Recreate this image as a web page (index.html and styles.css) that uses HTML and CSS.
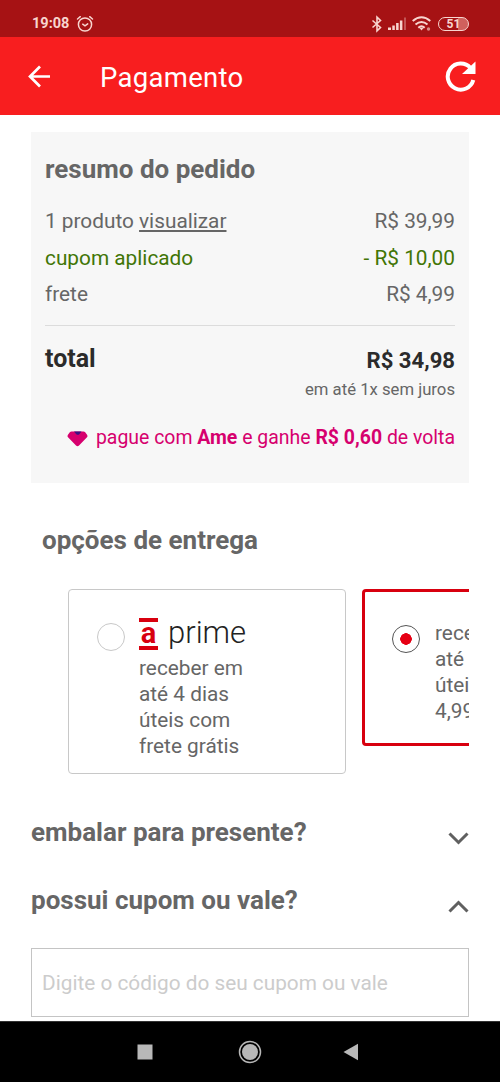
FILE: index.html
```
<!DOCTYPE html>
<html lang="pt-BR">
<head>
<meta charset="utf-8">
<title>Pagamento</title>
<link rel="stylesheet" href="styles.css">
</head>
<body>
<div class="statusbar">
  <span class="clock">19:08</span>
  <svg class="alarm" width="18" height="18" viewBox="0 0 18 18" fill="none" stroke="#f8d5cf" stroke-width="1.5" stroke-linecap="round"><circle cx="9" cy="9.5" r="6.6"/><path d="M6.7 9.2 9 10.9l2.700-2M1.500 4 4.300 1.700M16.500 4l-2.800-2.300"/></svg>
  <div class="indicators">
    <svg width="12" height="18" viewBox="0 0 12 18" fill="none" stroke="#f8d5cf" stroke-width="1.6"><path d="m1.500 5.500 8 7L6 15.800V2.200L9.500 5.500l-8 7"/></svg>
    <svg width="19" height="18" viewBox="0 0 19 18" fill="#f8d5cf"><path d="M0 12.500h3V15H0zM4.300 10.500h2.500V15H4.300zM8.100 8h2.500v7H8.100zM11.900 5.500h2.500V15h-2.500z"/><path opacity=".35" d="M16 2.500h2V15h-2z"/></svg>
    <svg class="wifi" width="20" height="18" viewBox="0 0 20 18" fill="none" stroke="#f8d5cf" stroke-width="2"><path d="M.7 6Q9.500-1.500 18.300 6M3.500 9.500q6-5 12 0M6.300 12.700q3.200-2.700 6.400 0"/><path d="m7.500 13 2 2.500 2-2.500z" fill="#f8d5cf" stroke="none"/><circle cx="16.500" cy="14" r="1.700" fill="#d98c87" stroke="none"/></svg>
    <span class="battery">51</span>
  </div>
</div>
<header class="appbar">
  <svg width="24" height="24" viewBox="0 0 24 24" fill="none" stroke="#fff" stroke-width="2.700"><path d="M23 12.500H3M13 2.500l-10 10 10 10"/></svg>
  <h1 class="title">Pagamento</h1>
  <svg class="reload" width="32" height="32" viewBox="0 0 32 32"><path d="M28.300 20A13 13 0 1 1 25.500 8" fill="none" stroke="#fff" stroke-width="4"/><path d="M30.500 1.500V14H17z" fill="#fff"/></svg>
</header>
<main class="content">
  <section class="summary">
    <h2 class="heading">resumo do pedido</h2>
    <div class="lines">
      <div class="line"><span>1 produto <a class="link">visualizar</a></span><span>R$ 39,99</span></div>
      <div class="line discount"><span>cupom aplicado</span><span>- R$ 10,00</span></div>
      <div class="line"><span>frete</span><span>R$ 4,99</span></div>
    </div>
    <div class="total"><span class="total-label">total</span><span class="total-value">R$ 34,98</span></div>
    <p class="installments">em até 1x sem juros</p>
    <p class="cashback">
      <svg width="21" height="16" viewBox="0 0 21 16"><path d="M4.500.5h12q1 0 1.700.8l2 2.700q.8 1.200-.2 2.200l-8 8.300q-1.500 1.400-3 0L1 6.200Q0 5.200.8 4l2-2.700Q3.500.5 4.500.5z" fill="#d6006e"/><path d="M7 .5h7.500l-2.200 2.700q-1.500 1-3 0z" fill="#3b1282"/></svg>
      <span class="cashback-text">pague com <b>Ame</b> e ganhe <b>R$ 0,60</b> de volta</span>
    </p>
  </section>
  <section class="delivery">
    <h2 class="heading delivery-title">opções de entrega</h2>
    <div class="options">
      <div class="option">
        <span class="radio"></span>
        <div>
          <div class="brand"><span class="brand-mark">a</span><span class="brand-name">prime</span></div>
          <p class="option-text">receber em<br>até 4 dias<br>úteis com<br>frete grátis</p>
        </div>
      </div>
      <div class="option selected">
        <span class="radio checked"></span>
        <p class="option-text">receber em<br>até 8 dias<br>úteis por R$<br>4,99</p>
      </div>
    </div>
  </section>
  <div class="accordion"><h2 class="heading">embalar para presente?</h2>
    <svg width="21" height="13" viewBox="0 0 21 13" fill="none" stroke="#606060" stroke-width="3"><path d="m1.500 1.500 9 9 9-9"/></svg></div>
  <div class="accordion"><h2 class="heading">possui cupom ou vale?</h2>
    <svg width="21" height="13" viewBox="0 0 21 13" fill="none" stroke="#606060" stroke-width="3"><path d="m1.500 11.500 9-9 9 9"/></svg></div>
  <input class="coupon" type="text" placeholder="Digite o código do seu cupom ou vale">
</main>
<nav class="navbar">
  <svg width="16" height="16" viewBox="0 0 16 16"><path d="M.5.5h15v15H.5z" fill="#b8b8b8"/></svg>
  <svg width="24" height="24" viewBox="0 0 24 24"><circle cx="12" cy="12" r="10.500" fill="none" stroke="#b8b8b8" stroke-width="1.500"/><circle cx="12" cy="12" r="8" fill="#b8b8b8"/></svg>
  <svg class="back" width="16" height="18" viewBox="0 0 16 18"><path d="M15 .8v16.400L.5 9z" fill="#b8b8b8"/></svg>
</nav>
</body>
</html>
```
FILE: styles.css
```
* { box-sizing: border-box; }
body {
  margin: 0;
  height: 1082px;
  display: flex;
  flex-direction: column;
  overflow: hidden;
  background: #fff;
  color: #666;
  font: 20.800px/26px Roboto, "Liberation Sans", sans-serif;
}
h1, h2, p { margin: 0; }
svg { display: block; flex: none; }

.statusbar {
  height: 37px;
  flex: none;
  display: flex;
  align-items: center;
  padding: 10px 31px 0 32px;
  background: #a61214;
  color: #f8d5cf;
}
.clock { width: 44px; font-size: 14.500px; font-weight: 700; }
.indicators { margin-left: auto; display: flex; align-items: center; }
.indicators svg { margin-right: 5px; }
.indicators svg:first-child { margin: 0 5px 0 0; }
.indicators .wifi { margin-right: 6px; }
.battery {
  width: 31px;
  height: 14px;
  border: 1.500px solid #f8d5cf;
  border-radius: 7px;
  background: linear-gradient(90deg, transparent 65%, #d0605d 65%);
  font-size: 12px;
  font-weight: 700;
  line-height: 12px;
  text-align: center;
}
.appbar {
  height: 78px;
  flex: none;
  display: flex;
  align-items: center;
  padding: 0 23px 0 27px;
  background: #f81e1f;
  color: #fff;
}
.title { margin-left: 49px; padding-top: 3px; font-size: 27.500px; font-weight: 400; line-height: 32px; letter-spacing: .3px; }
.reload { margin-left: auto; }

.content { flex: 1; min-height: 0; padding: 17px 31px 0; }
.heading { font-size: 26px; font-weight: 700; line-height: 32px; }
.summary { height: 351px; padding: 21px 14px 0; background: #f7f7f7; }
.lines { margin-top: 18px; padding-bottom: 12px; border-bottom: 1px solid #dcdcdc; }
.line { display: flex; justify-content: space-between; line-height: 36.500px; }
.discount { color: #417505; }
.link { text-decoration: underline; }
.total { display: flex; justify-content: space-between; margin-top: 18px; color: #2b2b2b; font-weight: 700; line-height: 30px; }
.total-label { font-size: 25px; }
.total-value { padding-top: 1px; font-size: 22.100px; }
.installments { margin-top: 3px; font-size: 16.700px; line-height: 24px; text-align: right; }
.cashback { display: flex; justify-content: flex-end; align-items: center; margin-top: 23px; color: #d6006e; font-size: 19.450px; }
.cashback svg { margin-top: 2px; }
.cashback-text { margin-left: 8px; }

.delivery { padding-top: 41px; }
.delivery-title { padding-left: 11px; }
.options { display: flex; align-items: flex-start; overflow: hidden; margin-top: 33px; padding-left: 37px; }
.option {
  flex: none;
  display: flex;
  width: 278px;
  height: 185px;
  margin-right: 16px;
  padding: 27px 28px 0;
  border: 1.500px solid #c8c8c8;
  border-radius: 4px;
}
.option.selected { height: 157px; padding: 28px 27px 0; border: 3px solid #d8000f; }
.radio {
  flex: none;
  width: 28px;
  height: 28px;
  margin: 6px 14px 0 0;
  border: 1.500px solid #c8c8c8;
  border-radius: 50%;
}
.checked { margin-top: 5px; margin-right: 15px; border-color: #555; background: radial-gradient(circle, #e60014 5.500px, transparent 6px); }
.brand { display: flex; align-items: center; height: 33px; }
.brand-mark {
  width: 19px;
  height: 32px;
  border: solid #d8000f;
  border-width: 4px 0;
  color: #d8000f;
  font-size: 29px;
  font-weight: 700;
  line-height: 22px;
  text-align: center;
}
.brand-name { margin-left: 10px; color: #222; font-size: 31px; font-weight: 300; line-height: 30px; margin-top: -2px; }
.option-text { margin-top: 5px; white-space: nowrap; }
.selected .option-text { margin-top: 0; }

.accordion { display: flex; justify-content: space-between; align-items: center; height: 68px; }
.delivery + .accordion { margin-top: 24px; }
.accordion svg { margin-top: 13px; }
.coupon {
  display: block;
  width: 100%;
  height: 69px;
  margin-top: 14px;
  padding: 1px 10px 0;
  border: 1.500px solid #c4c4c4;
  border-radius: 0;
  background: #fff;
  color: #666;
  font: 20.800px/26px Roboto, "Liberation Sans", sans-serif;
}
.coupon::placeholder { color: #ccc; }
.navbar {
  height: 61px;
  flex: none;
  display: flex;
  align-items: center;
  justify-content: center;
  gap: 85px;
  padding-right: 1px;
  border-top: 1px solid #333;
  background: #000;
}
.back { margin-left: -4px; margin-right: 4px; }
```
